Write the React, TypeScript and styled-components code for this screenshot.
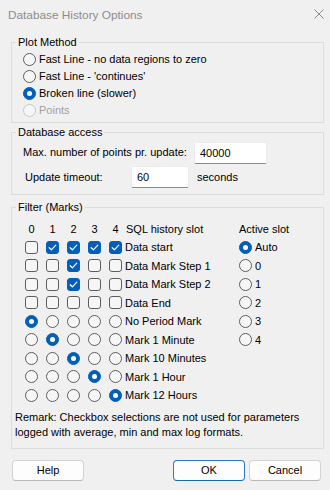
import React from 'react';
import styled, { createGlobalStyle } from 'styled-components';

const Global = createGlobalStyle`
  html, body { margin: 0; padding: 0; background: #f0f0f0; }
  body {
    font-family: "Liberation Sans", Arial, sans-serif;
    font-size: 11px;
    color: #000;
  }
  * { box-sizing: border-box; }
`;

const Window = styled.div`
  width: 330px;
  height: 490px;
  background: #f0f0f0;
  display: flex;
  flex-direction: column;
  padding: 0 6px 0 11px;
`;

const TitleBar = styled.div`
  height: 30px;
  display: flex;
  align-items: center;
  justify-content: space-between;
  margin-left: -3px;
  margin-bottom: 5px;
`;

const Title = styled.span`
  font-size: 11.8px;
  color: #8c8c8c;
`;

const CloseIcon = styled.svg`
  width: 10px;
  height: 10px;
  margin-right: 0px;
  margin-top: -2px;
`;

const Group = styled.fieldset<{ $pt: number; $pb: number; $mt?: number }>`
  margin: ${p => p.$mt ?? 0}px 0 0 0;
  padding: ${p => p.$pt}px 0 ${p => p.$pb}px 0;
  border: 1px solid #dcdcdc;
  min-width: 0;
`;

const Legend = styled.legend`
  margin-left: 4px;
  padding: 0 2px;
  line-height: 14px;
  height: 14px;
`;

const OptionRow = styled.label<{ $disabled?: boolean }>`
  height: 17px;
  display: flex;
  align-items: center;
  gap: 3px;
  padding-left: 11px;
  color: ${p => (p.$disabled ? '#a0a0a0' : '#000')};
`;

const Radio = styled.span<{ $on?: boolean; $disabled?: boolean }>`
  width: 13px;
  height: 13px;
  flex: none;
  border-radius: 50%;
  border: 1px solid ${p => (p.$on ? '#005fb8' : p.$disabled ? '#c6c6c6' : '#5d5d5d')};
  background: ${p => (p.$on ? '#005fb8' : '#f6f6f6')};
  display: inline-flex;
  align-items: center;
  justify-content: center;
  &::after {
    content: '';
    width: 5px;
    height: 5px;
    border-radius: 50%;
    background: #fff;
    display: ${p => (p.$on ? 'block' : 'none')};
  }
`;

const Box = styled.span<{ $on?: boolean }>`
  width: 13px;
  height: 13px;
  flex: none;
  border-radius: 3px;
  border: 1px solid ${p => (p.$on ? '#005fb8' : '#5d5d5d')};
  background: ${p => (p.$on ? '#005fb8' : '#f6f6f6')};
  display: inline-flex;
  align-items: center;
  justify-content: center;
`;

const FieldRow = styled.div<{ $indent: number; $labelWidth: number }>`
  height: 22px;
  display: grid;
  grid-template-columns: ${p => p.$labelWidth}px auto auto;
  justify-content: start;
  align-items: center;
  padding-left: ${p => p.$indent}px;
  & + & { margin-top: 2px; }
`;

const FieldLabel = styled.span<{ $nudge?: number }>`
  margin-top: ${p => p.$nudge ?? 0}px;
`;

const TextInput = styled.div<{ $w: number }>`
  width: ${p => p.$w}px;
  height: 22px;
  background: #fff;
  border: 1px solid #ececec;
  border-bottom: 1px solid #8a8a8a;
  border-radius: 2px;
  padding-left: 5px;
  display: flex;
  align-items: center;
`;

const Unit = styled.span`
  margin-left: 8px;
`;

const MarkGrid = styled.div`
  display: grid;
  grid-template-columns: repeat(5, 21px) 112px auto;
  grid-template-rows: 19px repeat(9, 18.5px);
  align-items: center;
  margin-left: 9px;
`;

const Head = styled.span<{ $center?: boolean; $shift?: number }>`
  text-align: ${p => (p.$center ? 'center' : 'left')};
  margin-left: ${p => p.$shift ?? 0}px;
`;

const Cell = styled.span`
  display: flex;
  justify-content: center;
  align-items: center;
`;

const SlotLabel = styled.span`
  margin-left: -1px;
  white-space: nowrap;
`;

const ActiveCell = styled.span`
  display: flex;
  align-items: center;
  gap: 3px;
  margin-left: 1px;
`;

const Remark = styled.p`
  margin: 5px 0 0 3px;
  line-height: 15px;
`;

const ButtonBar = styled.div`
  display: flex;
  margin: 11px 3px 0 1px;
`;

const Button = styled.button<{ $default?: boolean }>`
  width: 72px;
  height: 21px;
  font: inherit;
  color: #000;
  background: #fdfdfd;
  border: 1px solid ${p => (p.$default ? '#2a78c8' : '#d2d2d2')};
  border-bottom-color: ${p => (p.$default ? '#1f66b0' : '#b8b8b8')};
  border-radius: 4px;
  padding: 0;
  & + & { margin-left: 4px; }
`;

const Spacer = styled.div`
  flex: 1;
`;

const Check = () => (
  <svg width="9" height="9" viewBox="0 0 9 9">
    <path d="M1.2 4.7 L3.4 6.8 L7.8 2.2" fill="none" stroke="#fff" strokeWidth="1.2" strokeLinecap="round" strokeLinejoin="round" />
  </svg>
);

const checkRows: { label: string; on: number[] }[] = [
  { label: 'Data start', on: [0, 1, 1, 1, 1] },
  { label: 'Data Mark Step 1', on: [0, 0, 1, 0, 0] },
  { label: 'Data Mark Step 2', on: [0, 0, 1, 0, 0] },
  { label: 'Data End', on: [0, 0, 0, 0, 0] },
];

const radioRows: { label: string; sel: number }[] = [
  { label: 'No Period Mark', sel: 0 },
  { label: 'Mark 1 Minute', sel: 1 },
  { label: 'Mark 10 Minutes', sel: 2 },
  { label: 'Mark 1 Hour', sel: 3 },
  { label: 'Mark 12 Hours', sel: 4 },
];

const activeSlots = ['Auto', '0', '1', '2', '3', '4'];

const plotOptions = [
  { label: 'Fast Line - no data regions to zero', on: false, disabled: false },
  { label: "Fast Line - 'continues'", on: false, disabled: false },
  { label: 'Broken line (slower)', on: true, disabled: false },
  { label: 'Points', on: false, disabled: true },
];

export default function App() {
  const rows: React.ReactNode[] = [];
  checkRows.forEach((r, i) => {
    rows.push(
      <React.Fragment key={'c' + i}>
        {r.on.map((v, j) => (
          <Cell key={j}>
            <Box $on={!!v}>{v ? <Check /> : null}</Box>
          </Cell>
        ))}
        <SlotLabel>{r.label}</SlotLabel>
        {i < activeSlots.length ? (
          <ActiveCell>
            <Radio $on={i === 0} />
            {activeSlots[i]}
          </ActiveCell>
        ) : (
          <span />
        )}
      </React.Fragment>
    );
  });
  radioRows.forEach((r, k) => {
    const i = k + checkRows.length;
    rows.push(
      <React.Fragment key={'r' + k}>
        {[0, 1, 2, 3, 4].map(j => (
          <Cell key={j}>
            <Radio $on={r.sel === j} />
          </Cell>
        ))}
        <SlotLabel>{r.label}</SlotLabel>
        {i < activeSlots.length ? (
          <ActiveCell>
            <Radio />
            {activeSlots[i]}
          </ActiveCell>
        ) : (
          <span />
        )}
      </React.Fragment>
    );
  });

  return (
    <>
      <Global />
      <Window>
        <TitleBar>
          <Title>Database History Options</Title>
          <CloseIcon viewBox="0 0 10 10">
            <path d="M0.5 0.5 L9.5 9.5 M9.5 0.5 L0.5 9.5" stroke="#8a8a8a" strokeWidth="1" />
          </CloseIcon>
        </TitleBar>

        <Group $pt={1.5} $pb={3.5}>
          <Legend>Plot Method</Legend>
          {plotOptions.map(o => (
            <OptionRow key={o.label} $disabled={o.disabled}>
              <Radio $on={o.on} $disabled={o.disabled} />
              {o.label}
            </OptionRow>
          ))}
        </Group>

        <Group $pt={3} $pb={6} $mt={2}>
          <Legend>Database access</Legend>
          <FieldRow $indent={11} $labelWidth={171}>
            <FieldLabel $nudge={-2}>Max. number of points pr. update:</FieldLabel>
            <TextInput $w={73}>40000</TextInput>
          </FieldRow>
          <FieldRow $indent={13} $labelWidth={106}>
            <FieldLabel>Update timeout:</FieldLabel>
            <TextInput $w={58}>60</TextInput>
            <Unit>seconds</Unit>
          </FieldRow>
        </Group>

        <Group $pt={5} $pb={8} $mt={5}>
          <Legend>Filter (Marks)</Legend>
          <MarkGrid>
            {[0, 1, 2, 3, 4].map(n => (
              <Head key={n} $center>
                {n}
              </Head>
            ))}
            <Head>SQL history slot</Head>
            <Head $shift={1}>Active slot</Head>
            {rows}
          </MarkGrid>
          <Remark>
            Remark: Checkbox selections are not used for parameters
            <br />
            logged with average, min and max log formats.
          </Remark>
        </Group>

        <ButtonBar>
          <Button>Help</Button>
          <Spacer />
          <Button $default>OK</Button>
          <Button>Cancel</Button>
        </ButtonBar>
      </Window>
    </>
  );
}
